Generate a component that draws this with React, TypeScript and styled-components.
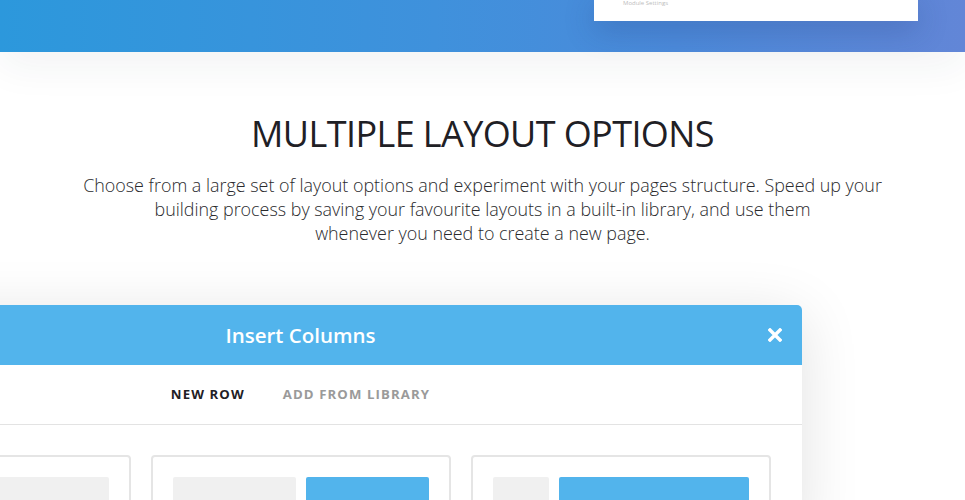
import styled, { createGlobalStyle } from "styled-components";

const GlobalStyle = createGlobalStyle`
  html, body {
    margin: 0;
    padding: 0;
    background: #fff;
    overflow: hidden;
  }
  body {
    font-family: "Open Sans", "Liberation Sans", sans-serif;
  }
`;

const Page = styled.div`
  width: 965px;
  height: 500px;
  overflow: hidden;
  display: flex;
  flex-direction: column;
`;

const Hero = styled.div`
  height: 52px;
  flex-shrink: 0;
  background: linear-gradient(90deg, #2c98dc 0%, #3f91dc 45%, #4c8ada 70%, #6286d7 100%);
  box-shadow: 0 14px 40px rgba(40, 50, 70, 0.06);
  display: flex;
  justify-content: flex-end;
  padding-right: 47px;
  position: relative;
  z-index: 1;
`;

const PreviewCard = styled.div`
  width: 324px;
  height: 21px;
  background: #fff;
  box-shadow: 0 8px 30px rgba(30, 50, 110, 0.28);
  font-size: 6px;
  color: #bdbdbd;
  padding-left: 29px;
  line-height: 7px;
  box-sizing: border-box;
`;

const Section = styled.section`
  display: flex;
  flex-direction: column;
  align-items: center;
  padding-top: 60px;
`;

const Heading = styled.h2`
  margin: 0;
  font-weight: 400;
  font-size: 36px;
  line-height: 44px;
  color: #1f2025;
  letter-spacing: -0.6px;
`;

const Lead = styled.p`
  margin: 17px 0 0;
  text-align: center;
  font-weight: 300;
  font-size: 17.9px;
  line-height: 24px;
  color: #2a2a2d;
`;

const Modal = styled.div`
  margin-top: 60px;
  margin-left: -201px;
  align-self: flex-start;
  width: 1003px;
  background: #fff;
  border-radius: 5px 5px 0 0;
  box-shadow: 0 10px 60px rgba(0, 0, 0, 0.12);
`;

const ModalHeader = styled.div`
  height: 60px;
  background: #52b4ec;
  border-radius: 5px 5px 0 0;
  display: flex;
  align-items: center;
  justify-content: center;
  position: relative;
`;

const ModalTitle = styled.h3`
  margin: 0;
  color: #fff;
  font-size: 20.5px;
  font-weight: 600;
`;

const CloseButton = styled.button`
  position: absolute;
  right: 19px;
  top: 22px;
  width: 16px;
  height: 16px;
  padding: 0;
  border: 0;
  background: none;
  display: flex;
  align-items: center;
  justify-content: center;
`;

const Tabs = styled.div`
  height: 60px;
  padding-bottom: 1px;
  box-sizing: border-box;
  border-bottom: 1px solid #e3e3e3;
  display: flex;
  align-items: center;
  justify-content: center;
  gap: 38px;
`;

const Tab = styled.span<{ $active?: boolean }>`
  font-size: 13.2px;
  font-weight: 700;
  letter-spacing: 1.1px;
  color: ${(p) => (p.$active ? "#1f2025" : "#9a9a9a")};
`;

const Grid = styled.div`
  display: flex;
  gap: 20px;
  padding: 30px 32px 0;
`;

const LayoutCard = styled.div`
  width: 300px;
  flex-shrink: 0;
  height: 80px;
  box-sizing: border-box;
  border: 2px solid #e5e5e5;
  border-radius: 4px;
  padding: 20px;
  display: flex;
  gap: 10px;
`;

const Col = styled.div<{ $blue?: boolean; $w: number }>`
  width: ${(p) => p.$w}px;
  height: 60px;
  border-radius: 2px;
  background: ${(p) => (p.$blue ? "#52b4ec" : "#f0f0f0")};
`;

const layouts = [
  [{ w: 256 }],
  [{ w: 123 }, { w: 123, blue: true }],
  [{ w: 56 }, { w: 190, blue: true }],
];

export default function App() {
  return (
    <Page>
      <GlobalStyle />
      <Hero>
        <PreviewCard>Module Settings</PreviewCard>
      </Hero>
      <Section>
        <Heading>MULTIPLE LAYOUT OPTIONS</Heading>
        <Lead>
          Choose from a large set of layout options and experiment with your pages structure. Speed up your
          <br />
          building process by saving your favourite layouts in a built-in library, and use them
          <br />
          whenever you need to create a new page.
        </Lead>
        <Modal>
          <ModalHeader>
            <ModalTitle>Insert Columns</ModalTitle>
            <CloseButton aria-label="close">
              <svg width="14" height="14" viewBox="0 0 14 14">
                <path d="M2 2 L12 12 M12 2 L2 12" stroke="#fff" strokeWidth="3.4" strokeLinecap="square" />
              </svg>
            </CloseButton>
          </ModalHeader>
          <Tabs>
            <Tab $active>NEW ROW</Tab>
            <Tab>ADD FROM LIBRARY</Tab>
          </Tabs>
          <Grid>
            {layouts.map((cols, i) => (
              <LayoutCard key={i}>
                {cols.map((c, j) => (
                  <Col key={j} $w={c.w} $blue={c.blue} />
                ))}
              </LayoutCard>
            ))}
          </Grid>
        </Modal>
      </Section>
    </Page>
  );
}
